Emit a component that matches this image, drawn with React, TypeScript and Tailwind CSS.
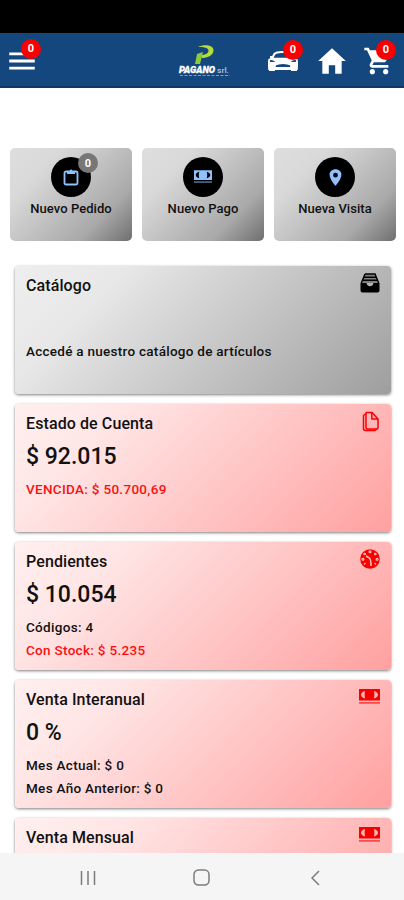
import { IoMdHome, IoMdMenu } from "react-icons/io";
import { IoCarSportSharp, IoLocationSharp } from "react-icons/io5";
import { MdShoppingCart } from "react-icons/md";

type IconProps = { className?: string };

function ClipboardIcon({ className }: IconProps) {
  return (
    <svg className={className} viewBox="0 0 18 18" fill="none" stroke="currentColor">
      <rect x="2.5" y="3.5" width="13" height="13" rx="1.5" strokeWidth="1.8" />
      <path d="M5 3H7.5L9 1L10.5 3H13V6H5Z" fill="currentColor" stroke="none" />
    </svg>
  );
}

function CashIcon({ className }: IconProps) {
  return (
    <svg className={className} viewBox="0 0 21 16" fill="currentColor">
      <path
        fillRule="evenodd"
        d="M0 0H21V11.5H0ZM6.2 2C3.7 2.6 2 4 2 5.8C2 7.6 3.7 9 6.2 9.6C5.4 7.2 5.4 4.4 6.2 2ZM14.8 2C15.6 4.4 15.6 7.2 14.8 9.6C17.3 9 19 7.6 19 5.8C19 4 17.3 2.6 14.8 2Z"
      />
      <path d="M0 13.2H21V14.6H0Z" opacity="0.75" />
    </svg>
  );
}

function TrayIcon({ className }: IconProps) {
  return (
    <svg className={className} viewBox="0 0 20 20" fill="currentColor">
      <path d="M5 1H15L18.5 10H1.5Z" opacity="0.3" />
      <path d="M5 1H15L18.7 10M5 1L1.3 10M4 4.3H16M3 7.3H17" fill="none" stroke="currentColor" strokeWidth="1.4" />
      <path d="M0.5 10H6.5C7 12.3 8.3 13.3 10 13.3S13 12.3 13.5 10H19.5V17.5A2 2 0 0 1 17.5 19.5H2.5A2 2 0 0 1 0.5 17.5Z" />
    </svg>
  );
}

function DocumentsIcon({ className }: IconProps) {
  return (
    <svg className={className} viewBox="0 0 21 21" fill="none" stroke="currentColor" strokeWidth="1.5" strokeLinejoin="round">
      <path d="M7.5 1.5H13L19 8V16.5A1.5 1.5 0 0 1 17.5 18H8.5A1.5 1.5 0 0 1 7 16.5V2Z" />
      <path d="M12.8 1.5V8H19" />
      <path d="M7 2.5L4.5 4.5V17.5A2 2 0 0 0 6.5 19.5H16L18 18" />
    </svg>
  );
}

function GaugeIcon({ className }: IconProps) {
  return (
    <svg className={className} viewBox="0 0 20 20">
      <circle cx="10" cy="10" r="9.8" fill="currentColor" />
      <g fill="none" stroke="#ffc4c4" strokeWidth="1.1">
        <circle cx="10" cy="2.8" r="1" />
        <circle cx="4.7" cy="5" r="0.8" />
        <circle cx="15.3" cy="5" r="0.8" />
        <circle cx="2.9" cy="10.3" r="1" />
        <circle cx="17.1" cy="10.3" r="1" />
        <path d="M4 15.5L5.5 14M16 15.5L14.5 14" />
        <path d="M6 7L9.5 9C10.5 10 11 11 11 17" strokeWidth="1.5" />
      </g>
    </svg>
  );
}

function Logo() {
  return (
    <svg className="w-[54px] h-[34px]" viewBox="0 0 54 34">
      <path
        d="M20 3C26 0 36 1 35.5 6.5C35 12 29 14 24 14L23 11C27 11 30.5 9.5 30.5 6.5C30.5 3.5 25 3 20 3Z"
        fill="#b5dc3c"
      />
      <path d="M19 10L25 8L22 20H17Z" fill="#8ecb3c" />
      <text x="1" y="29" fontSize="9" fontWeight="900" fontStyle="italic" fill="#fff" stroke="#fff" strokeWidth="0.3" textLength="36" lengthAdjust="spacingAndGlyphs">
        PAGANO
      </text>
      <text x="39" y="29" fontSize="7" fill="#b0c4dc" textLength="12" lengthAdjust="spacingAndGlyphs">
        srl.
      </text>
      <path d="M2 31.5H52" stroke="#7f9dc2" strokeWidth="1" strokeDasharray="3 1.5" />
    </svg>
  );
}

function Badge({ className }: { className: string }) {
  return (
    <span className={`absolute flex items-center justify-center w-5 h-5 rounded-full text-[11px] leading-none font-bold text-white ${className}`}>
      0
    </span>
  );
}

const actions = [
  { title: "Nuevo Pedido", icon: ClipboardIcon, size: "w-[18px] h-[18px]", badge: true },
  { title: "Nuevo Pago", icon: CashIcon, size: "w-[18px] h-[14px]", badge: false },
  { title: "Nueva Visita", icon: IoLocationSharp, size: "w-[19px] h-[19px]", badge: false },
];

const cards = [
  {
    title: "Estado de Cuenta",
    value: "$ 92.015",
    lines: [{ text: "VENCIDA: $ 50.700,69", red: true }],
    icon: DocumentsIcon,
    size: "-mt-[2px] w-[21px] h-[21px]",
  },
  {
    title: "Pendientes",
    value: "$ 10.054",
    lines: [
      { text: "Códigos: 4", red: false },
      { text: "Con Stock: $ 5.235", red: true },
    ],
    icon: GaugeIcon,
    size: "-mt-[2px] w-5 h-5",
  },
  {
    title: "Venta Interanual",
    value: "0 %",
    lines: [
      { text: "Mes Actual: $ 0", red: false },
      { text: "Mes Año Anterior: $ 0", red: false },
    ],
    icon: CashIcon,
    size: "w-[21px] h-4",
  },
  { title: "Venta Mensual", value: "", lines: [], icon: CashIcon, size: "w-[21px] h-4" },
];

export default function App() {
  return (
    <div className="flex flex-col w-[404px] h-[900px] overflow-hidden bg-white font-[Roboto,sans-serif] font-medium text-[#111]">
      <div className="h-[33px] shrink-0 bg-black" />
      <header className="flex h-[55px] shrink-0 items-center bg-[#15477f] border-b-2 border-[#0f3869] text-white">
        <div className="relative ml-[5px] mt-[2px]">
          <IoMdMenu className="w-[34px] h-[34px]" />
          <Badge className="left-4 -top-[5px] bg-[#f90000]" />
        </div>
        <div className="ml-[139px] mt-[2px]">
          <Logo />
        </div>
        <div className="relative ml-[35px] mt-[2px]">
          <IoCarSportSharp className="w-[32px] h-[32px]" />
          <Badge className="left-4 -top-[5px] bg-[#f90000]" />
        </div>
        <IoMdHome className="ml-[16px] mt-[2px] w-[34px] h-[34px]" />
        <div className="relative ml-[14px] mt-[2px]">
          <MdShoppingCart className="w-[32px] h-[32px]" />
          <Badge className="left-[13px] -top-[5px] bg-[#f90000]" />
        </div>
      </header>

      <main className="flex-1 min-h-0 overflow-hidden">
        <div className="mt-[60px] ml-[10px] flex gap-[10px]">
          {actions.map((a) => {
            const Icon = a.icon;
            return (
              <div
                key={a.title}
                className="flex w-[122px] h-[93px] flex-col items-center rounded-[5px] bg-[linear-gradient(135deg,#dedede_0%,#d9d9d9_25%,#c6c6c6_45%,#a9a9a9_75%,#6f6f6f_100%)] pt-[9px]"
              >
                <div className="relative flex w-10 h-10 items-center justify-center rounded-full bg-black text-[#8fc1ff]">
                  <Icon className={a.size} />
                  {a.badge && <Badge className="left-[27px] -top-1 bg-[#777]" />}
                </div>
                <p className="mt-[3px] text-[13px] leading-[18px] tracking-[0.05px] whitespace-nowrap">{a.title}</p>
              </div>
            );
          })}
        </div>

        <div className="mt-[24.5px] ml-[15px] flex w-[376px] flex-col gap-[9.5px]">
          <section className="h-[128.5px] shrink-0 rounded-[4px] bg-[linear-gradient(135deg,#eeeeee_0%,#e8e8e8_22%,#c8c8c8_55%,#9e9e9e_100%)] px-[11px] pt-[9.5px] shadow-[0_1px_3px_rgba(0,0,0,0.5)]">
            <div className="flex h-[22px] justify-between">
              <h2 className="text-[16px] leading-[22px] tracking-[0.1px]">Catálogo</h2>
              <TrayIcon className="-mt-[2px] w-5 h-5 text-black" />
            </div>
            <p className="mt-[45px] text-[13.5px] leading-[18px] tracking-[0.27px]">Accedé a nuestro catálogo de artículos</p>
          </section>
          {cards.map((c) => {
            const Icon = c.icon;
            return (
              <section
                key={c.title}
                className="h-[128.5px] shrink-0 rounded-[4px] bg-[linear-gradient(135deg,#ffefef_0%,#ffe6e6_22%,#ffc8c8_55%,#ffa0a0_100%)] px-[11px] pt-[9.5px] shadow-[0_1px_3px_rgba(0,0,0,0.5)]"
              >
                <div className="flex h-[22px] justify-between">
                  <h2 className="text-[16px] leading-[22px] tracking-[0.1px]">{c.title}</h2>
                  <Icon className={`${c.size} text-[#f80000]`} />
                </div>
                <p className="mt-[8px] text-[23px] leading-[28px]">{c.value}</p>
                <div className="mt-[7px]">
                  {c.lines.map((l) => (
                    <p key={l.text} className={`text-[13.5px] leading-[22.5px] tracking-[0.3px] ${l.red ? "text-[#fa1010]" : ""}`}>
                      {l.text}
                    </p>
                  ))}
                </div>
              </section>
            );
          })}
        </div>
      </main>

      <nav className="flex h-[47px] shrink-0 items-center bg-[#f5f5f5] pt-[2px] text-[#7c7c7c]">
        <svg className="ml-[80px] w-4 h-4" viewBox="0 0 16 16" stroke="currentColor" strokeWidth="1.5">
          <path d="M1.5 1V15M8 1V15M14.5 1V15" />
        </svg>
        <svg className="ml-[97px] w-[17px] h-[17px]" viewBox="0 0 17 17" fill="none" stroke="currentColor" strokeWidth="1.5">
          <rect x="1" y="1" width="15" height="15" rx="4.5" />
        </svg>
        <svg className="ml-[101px] w-[9px] h-4" viewBox="0 0 9 16" fill="none" stroke="currentColor" strokeWidth="1.5">
          <path d="M8 1L1 8L8 15" />
        </svg>
      </nav>
    </div>
  );
}
